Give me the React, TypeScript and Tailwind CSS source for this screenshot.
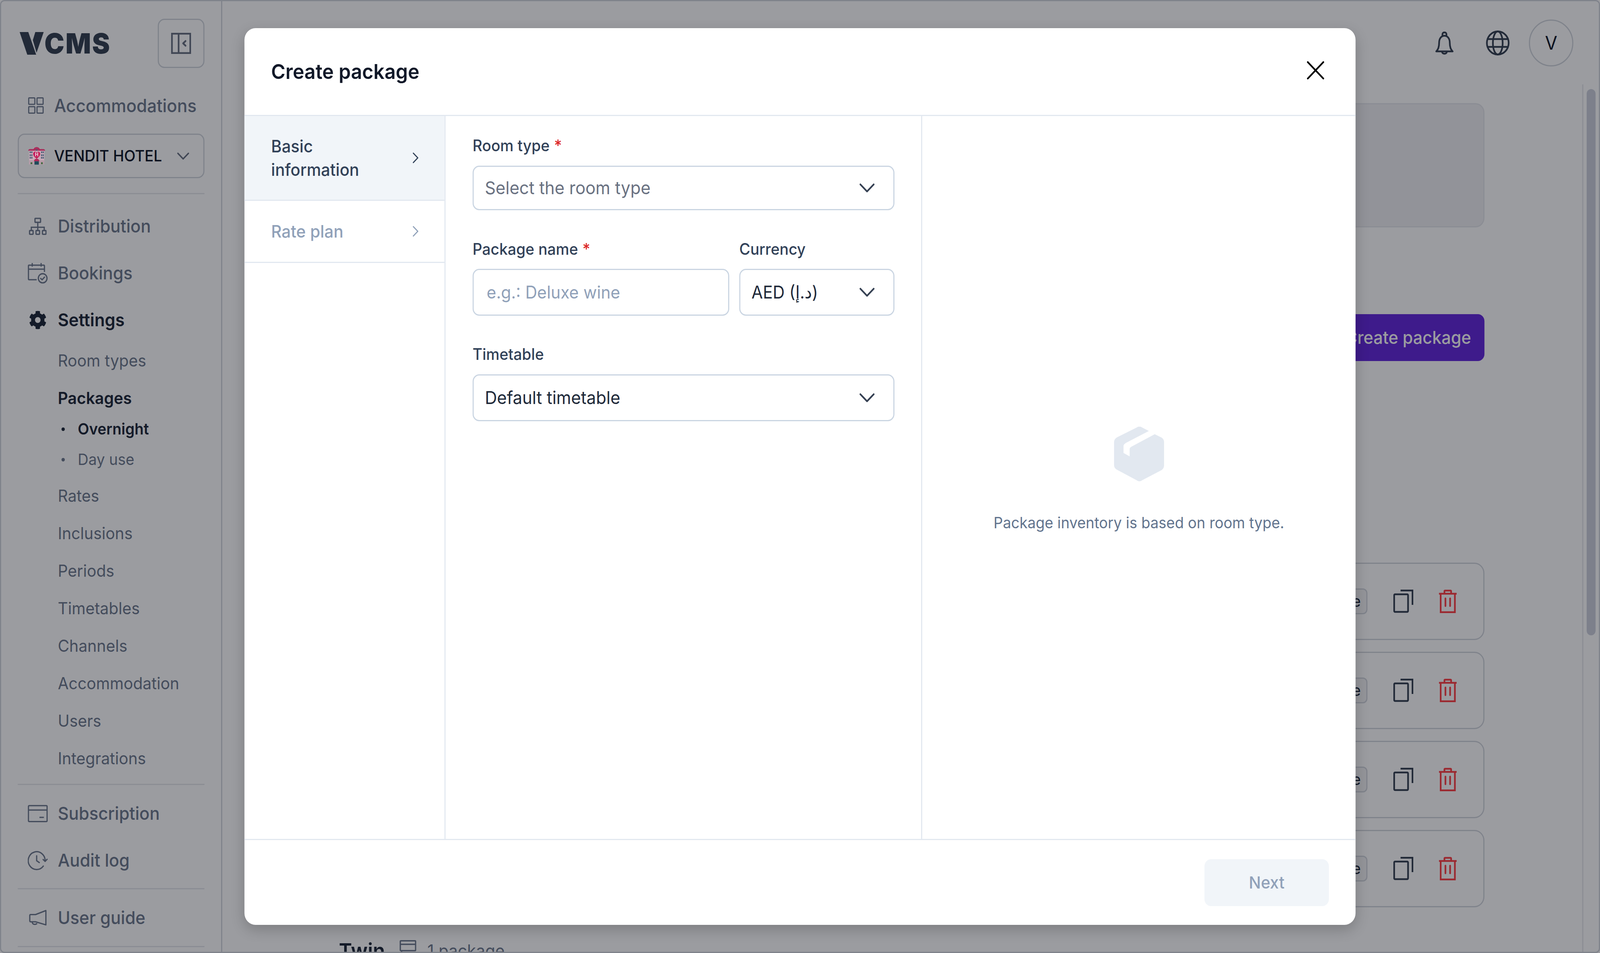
import { ChevronDown, ChevronRight, X } from "lucide-react";
import { FaCog } from "react-icons/fa";

const CollapseIcon = () => (
  <svg viewBox="0 0 18 18" className="h-[54px] w-[54px]" fill="none" stroke="currentColor" strokeWidth="1.5">
    <rect x="0.75" y="0.75" width="16.5" height="16.5" />
    <path d="M6.75 1v16" />
    <path d="M13 7l-2.2 2 2.2 2" strokeLinecap="round" strokeLinejoin="round" />
  </svg>
);

const GridIcon = () => (
  <svg viewBox="0 0 14 14" className="h-[42px] w-[42px]" fill="none" stroke="currentColor" strokeWidth="1">
    <rect x="0.5" y="0.5" width="5.5" height="5.5" rx="0.5" />
    <rect x="8" y="0.5" width="5.5" height="5.5" rx="0.5" />
    <rect x="0.5" y="8" width="5.5" height="5.5" rx="0.5" />
    <rect x="8" y="8" width="5.5" height="5.5" rx="0.5" />
  </svg>
);

// the love hotel emoji, sits above the backdrop like in the app
const HotelIcon = () => (
  <svg viewBox="0 0 140 140" className="relative z-10 h-[46px] w-[46px]">
    <rect x="8" y="24" width="124" height="112" fill="#c9aab8" />
    <rect x="42" y="8" width="56" height="30" fill="#c9aab8" />
    <path d="M0 30c2-9 8-13 14-13h28c6-9 16-16 28-16s22 7 28 16h28c6 0 12 4 14 13z" fill="#a8305c" />
    <rect x="64" y="18" width="12" height="12" rx="4" fill="#46607a" />
    {[13, 26, 106, 119].map((x) =>
      [35, 58, 78].map((y) => <rect key={`${x}-${y}`} x={x} y={y} width="9" height="13" fill="#3f5a74" />),
    )}
    <path d="M70 92C50 78 41 66 41 54c0-18 21-23 29-9 8-14 29-9 29 9 0 12-9 24-29 38z" fill="#c41e5a" />
    <text x="70" y="72" textAnchor="middle" fontSize="38" fontWeight="700" fill="#eadbe0">H</text>
    <rect x="8" y="104" width="124" height="32" fill="#b49ba6" />
    <path d="M48 112c0-12 10-20 22-20s22 8 22 20z" fill="#b02858" />
    <rect x="52" y="112" width="36" height="26" fill="#1f4a5a" />
    <rect x="20" y="120" width="14" height="14" fill="#3d6a3d" />
    <rect x="106" y="120" width="14" height="14" fill="#3d6a3d" />
  </svg>
);

const SitemapIcon = () => (
  <svg viewBox="0 0 16 15" className="h-[45px] w-12" fill="none" stroke="currentColor" strokeWidth="1.1">
    <rect x="5.5" y="0.6" width="5" height="3.4" rx="0.4" />
    <rect x="0.6" y="11" width="3.2" height="3.2" rx="0.5" />
    <rect x="6.4" y="11" width="3.2" height="3.2" rx="0.5" />
    <rect x="12.2" y="11" width="3.2" height="3.2" rx="0.5" />
    <path d="M8 4v7M2.2 11V8.2h11.6V11" />
  </svg>
);

const CalendarCheckIcon = () => (
  <svg viewBox="0 0 18 18" className="h-[54px] w-[54px]" fill="none" stroke="currentColor" strokeWidth="1.1">
    <path d="M8 14.6H1.2a.6.6 0 0 1-.6-.6V2.8a.6.6 0 0 1 .6-.6h13.2a.6.6 0 0 1 .6.6V8" />
    <path d="M.6 5.6H15M4 .4v3M12 .4v3" />
    <circle cx="13.4" cy="13.4" r="3.9" />
    <path d="M11.6 13.5l1.3 1.2 2.2-2.3" strokeLinecap="round" strokeLinejoin="round" />
  </svg>
);

const CardIcon = () => (
  <svg viewBox="0 0 18 15" className="h-[45px] w-[54px]" fill="none" stroke="currentColor" strokeWidth="1.1">
    <rect x="0.6" y="0.6" width="16.8" height="13.6" rx="0.8" />
    <path d="M.6 4.4h16.8M10.5 10.6h4" />
  </svg>
);

const ClockIcon = () => (
  <svg viewBox="0 0 18 17" className="h-[51px] w-[54px]" fill="none" stroke="currentColor" strokeWidth="1.1" strokeLinecap="round">
    <path d="M15.6 8.600A7.600 7.600 0 1 0 14 13.200" />
    <path d="M8 4.400v4.200l2.400 1.600" />
    <path d="M13.800 7.600l1.800 1.600 1.800-1.800" strokeLinejoin="round" />
  </svg>
);

const MegaphoneIcon = () => (
  <svg viewBox="0 0 16 14" className="h-[42px] w-12" fill="none" stroke="currentColor" strokeWidth="1.1" strokeLinejoin="round">
    <path d="M15.300.8v12.200L6 10.400H1.600a.8.8 0 0 1-.8-.8V5a.8.8 0 0 1 .8-.8H6z" />
    <path d="M3 10.400c0 2.200 2.600 2.800 4.400 1.400" />
  </svg>
);

const BellIcon = () => (
  <svg viewBox="0 0 24 24" className="h-[72px] w-[72px]" fill="none" stroke="currentColor" strokeWidth="1.5" strokeLinecap="round" strokeLinejoin="round">
    <path d="M10.200 5.600V4.400c0-1.900 3.600-1.900 3.600 0v1.200" />
    <path d="M4.600 19.200c1.800-1.600 2.600-3.600 2.600-7.400 0-3.600 2-6 4.800-6s4.800 2.400 4.800 6c0 3.800.8 5.800 2.600 7.400z" />
    <path d="M9.800 19.400c.3 2.300 4.100 2.300 4.400 0" />
  </svg>
);

const GlobeIcon = () => (
  <svg viewBox="0 0 24 24" className="h-[72px] w-[72px]" fill="none" stroke="currentColor" strokeWidth="1.5">
    <circle cx="12" cy="12" r="9.800" />
    <ellipse cx="12" cy="12" rx="4.400" ry="9.800" />
    <path d="M2.800 8.700h18.400M2.800 15.300h18.400" />
  </svg>
);

const CopyIcon = () => (
  <svg viewBox="0 0 18 20" className="h-[60px] w-[54px]" fill="none" stroke="currentColor" strokeWidth="1.5">
    <rect x="0.75" y="4" width="12.5" height="15" rx="0.8" />
    <path d="M6.500.75h10.750V13" />
  </svg>
);

const TrashIcon = () => (
  <svg viewBox="0 0 16 20" className="h-[60px] w-12" fill="none" stroke="currentColor" strokeWidth="1.5">
    <path d="M0 3.500h16M1.600 3.500v15.750h12.800V3.500" />
    <path d="M5 3.500V1.400a.6.6 0 0 1 .6-.6h4.800a.6.6 0 0 1 .6.6v2.100" />
    <path d="M5.900 7.500v6.500M10.100 7.500v6.500" strokeLinecap="round" />
  </svg>
);

const BedIcon = () => (
  <svg viewBox="0 0 15 18" className="h-[54px] w-[45px]" fill="none" stroke="currentColor" strokeWidth="1.2">
    <rect x="0.6" y="0.6" width="13.8" height="8.4" rx="0.6" />
    <path d="M.6 3.600h13.800M1.800 9v8M14 12H7v5" />
  </svg>
);

// box with the strap cut out, empty state of the side panel
const PackageIcon = () => (
  <svg viewBox="0 0 45 47" className="h-[141px] w-[135px] text-slate-200" fill="currentColor">
    <path d="M20.600.6c1.200-1 3.200-1 4.400 0l6.300 3.100-20.300 10c-1.700 1-2.500 1.800-2.500 3v5.700l5.500 2.900v-5.900c0-1.200.8-2 2.400-2.700L36.600 6.400l6.400 3c1.400 1 2 2.200 2 3.900v19.500c0 1.800-.6 3.100-2 4.100L25 45.800c-1.200 1-3.200 1-4.400 0L3 36.900c-2-1-3-2.300-3-4.100V13.300c0-1.900 1-3.400 3-4.400z" />
  </svg>
);

const subItems = ["Rates", "Inclusions", "Periods", "Timetables", "Channels", "Accommodation", "Users", "Integrations"];

const NavRow = ({ icon, label, active }: { icon: React.ReactNode; label: string; active?: boolean }) => (
  <div className={`flex h-[120px] items-center ${active ? "font-semibold text-gray-800" : "font-medium text-[#6e7a8e]"}`}>
    <div className="ml-[27px] flex w-[54px] shrink-0 items-center justify-center text-[#6e7a8e]">{icon}</div>
    <span className="ml-[27px] text-[45.5px]">{label}</span>
  </div>
);

const Sidebar = () => (
  <aside className="flex w-[597px] shrink-0 flex-col border-r-[3px] border-gray-300 px-[45px]">
    <div className="mt-[45px] flex h-[126px] shrink-0 items-center justify-between">
      <div className="flex items-center gap-[2px] pl-[5px] text-gray-700">
        <svg viewBox="0 0 195 174" className="h-[58px] w-[65px]" fill="currentColor">
          <path d="M0 0h70l64 174H62z" />
          <path d="M127 0h68l-58 159-30-97z" />
        </svg>
        <span className="text-[72px] leading-none font-black tracking-[3px]">CMS</span>
      </div>
      <button className="flex h-[126px] w-[126px] items-center justify-center rounded-[18px] border-[3px] border-gray-300 text-gray-500">
        <CollapseIcon />
      </button>
    </div>

    <div className="mt-[48px] flex h-[96px] items-center pl-[28px] font-medium text-[#6e7a8e]">
      <span className="w-[70px]"><GridIcon /></span>
      <span className="text-[46px]">Accommodations</span>
    </div>

    <div className="mt-[24px] flex h-[114px] items-center rounded-[18px] border-[3px] border-gray-300 pr-[26px] pl-[25px]">
      <span className="w-[70px] shrink-0"><HotelIcon /></span>
      <span className="flex-1 text-[40px] font-medium text-gray-900">VENDIT HOTEL</span>
      <ChevronDown className="h-[57px] w-[57px] text-gray-500" strokeWidth={1.5} />
    </div>

    <div className="mt-[38px] border-t-[3px] border-gray-200" />

    <div className="mt-[22px]">
      <NavRow icon={<SitemapIcon />} label="Distribution" />
      <NavRow icon={<CalendarCheckIcon />} label="Bookings" />
      <NavRow icon={<FaCog className="h-12 w-12 text-gray-800" />} label="Settings" active />
    </div>

    <div className="pl-[108px] text-[42.5px] text-[#6e7a8e]">
      <div className="-mt-[4px] flex h-[96px] items-center">Room types</div>
      <div className="flex h-[96px] items-center font-semibold text-gray-800">Packages</div>
      <div className="-mt-[8px] flex h-[78px] items-center text-[40px] font-semibold text-gray-800">
        <span className="mr-[35px] ml-[10px] h-[9px] w-[9px] rounded-full bg-gray-800" />
        Overnight
      </div>
      <div className="flex h-[78px] items-center text-[40px]">
        <span className="mr-[35px] ml-[10px] h-[9px] w-[9px] rounded-full bg-[#6e7a8e]" />
        Day use
      </div>
      <div className="mt-[6px]">
        {subItems.map((s) => (
          <div key={s} className="flex h-[96px] items-center">{s}</div>
        ))}
      </div>
    </div>

    <div className="mt-[17px] border-t-[3px] border-gray-200" />
    <div className="mt-[13px]">
      <NavRow icon={<CardIcon />} label="Subscription" />
      <NavRow icon={<ClockIcon />} label="Audit log" />
    </div>
    <div className="mt-[11px] border-t-[3px] border-gray-200" />
    <div className="mt-[13px]">
      <NavRow icon={<MegaphoneIcon />} label="User guide" />
    </div>
    <div className="mt-[12px] border-t-[3px] border-gray-200" />
  </aside>
);

const PackageRow = () => (
  <div className="flex h-[198px] items-center justify-end rounded-[27px] border-[3px] border-gray-300 pr-[72px]">
    <span className="flex h-[66px] items-center rounded-[12px] border-[3px] border-gray-300 bg-gray-100 px-[15px] text-[40px] text-gray-800">Active</span>
    <span className="ml-[70px] text-gray-700"><CopyIcon /></span>
    <span className="ml-[69px] text-[#ff4045]"><TrashIcon /></span>
  </div>
);

const Page = () => (
  <main className="flex min-w-0 flex-1 flex-col">
    <header className="flex h-[213px] shrink-0 items-center justify-end pr-[69px] text-gray-700">
      <span className="mr-[72px]"><BellIcon /></span>
      <span className="mr-[48px]"><GlobeIcon /></span>
      <div className="flex h-[120px] w-[120px] items-center justify-center rounded-full border-[3px] border-gray-300 text-[48px] text-gray-900">V</div>
    </header>
    <div className="flex min-h-0 flex-1">
      <div className="min-w-0 flex-1 pt-[48px] pr-[264px] pl-[240px]">
        <div className="h-[318px] rounded-[24px] border-[3px] border-gray-200 bg-[#f0f1f3]" />
        <div className="mt-[222px] flex justify-end">
          <button className="flex h-[120px] items-center rounded-[18px] bg-[#6429dc] px-[36px] text-[45px] font-medium text-white">Create package</button>
        </div>
        <div className="mt-[516px] flex flex-col gap-[30px]">
          <PackageRow />
          <PackageRow />
          <PackageRow />
          <PackageRow />
        </div>
        <div className="mt-[69px] flex h-[84px] items-center pl-[75px]">
          <span className="text-[54px] font-semibold text-gray-800">Twin</span>
          <span className="mr-[30px] ml-[39px] text-[#6e7a8e]"><BedIcon /></span>
          <span className="text-[44px] text-[#6e7a8e]">1 package</span>
        </div>
      </div>
      <div className="w-[45px] shrink-0 border-l-[3px] border-gray-200 pt-[12px] pl-[9px]">
        <div className="h-[1398px] w-6 rounded-full bg-[#cdd1dd]" />
      </div>
    </div>
  </main>
);

const Label = ({ text, required }: { text: string; required?: boolean }) => (
  <div className="text-[40.5px] leading-[60px] font-medium text-slate-700">
    {text}
    {required && <span className="ml-[12px] text-[#dc2626]">*</span>}
  </div>
);

const Select = ({ value, placeholder, textSize, className }: { value: string; placeholder?: boolean; textSize: string; className: string }) => (
  <div className={`flex items-center justify-between rounded-[18px] border-[3px] border-slate-300 pr-[35px] pl-[30px] ${className}`}>
    <span className={`${textSize} ${placeholder ? "text-gray-500" : "text-gray-800"}`}>{value}</span>
    <ChevronDown className="h-[72px] w-[72px] text-gray-700" strokeWidth={1.5} />
  </div>
);

const CreatePackageModal = () => (
  <div className="flex h-[2295px] w-[3000px] flex-col rounded-[30px] bg-white shadow-[0_12px_36px_rgba(0,0,0,0.2)]">
    <div className="flex h-[225px] shrink-0 items-center justify-between border-b-[3px] border-slate-200 pr-[66px] pl-[72px]">
      <h2 className="text-[52.5px] font-semibold text-gray-900">Create package</h2>
      <X className="h-[84px] w-[84px] -translate-y-[3px] text-black" strokeWidth={1.3} />
    </div>

    <div className="flex min-h-0 flex-1 border-b-[3px] border-slate-200">
      <nav className="w-[543px] shrink-0 border-r-[3px] border-slate-200">
        <div className="flex h-[217px] items-center justify-between border-b-[3px] border-slate-200 bg-slate-100 pr-[54px] pl-[72px] text-[43.5px] leading-[60px] font-medium text-slate-700">
          <span>Basic<br />information</span>
          <ChevronRight className="h-12 w-12" strokeWidth={1.5} />
        </div>
        <div className="flex h-[159px] items-center justify-between border-b-[3px] border-slate-200 pr-[54px] pl-[72px] text-[44px] font-medium text-slate-400">
          <span>Rate plan</span>
          <ChevronRight className="h-12 w-12" strokeWidth={1.5} />
        </div>
      </nav>

      <div className="w-[1287px] shrink-0 border-r-[3px] border-slate-200 pt-[46px] pr-[72px] pl-[73px]">
        <Label text="Room type" required />
        <Select value="Select the room type" placeholder textSize="text-[45.5px]" className="mt-[21px] h-[114px]" />
        <div className="mt-[70px] flex gap-[27px]">
          <div className="w-[693px]">
            <Label text="Package name" required />
            <input
              placeholder="e.g.: Deluxe wine"
              className="mt-[20px] h-[120px] w-full rounded-[18px] border-[3px] border-slate-300 px-[35px] text-[44.5px] placeholder:text-slate-400"
            />
          </div>
          <div className="min-w-0 flex-1">
            <Label text="Currency" />
            <Select value="AED (د.إ)" textSize="text-[44.5px]" className="mt-[20px] h-[120px]" />
          </div>
        </div>
        <div className="mt-[69px]">
          <Label text="Timetable" />
          <Select value="Default timetable" textSize="text-[45.5px]" className="mt-[21px] h-[120px]" />
        </div>
      </div>

      <div className="flex min-w-0 flex-1 flex-col items-center pt-[795px]">
        <PackageIcon />
        <p className="mt-[75px] text-[39.5px] leading-[60px] text-slate-500">Package inventory is based on room type.</p>
      </div>
    </div>

    <div className="flex h-[217px] shrink-0 items-center justify-end pr-[72px]">
      <button className="flex h-[120px] w-[336px] items-center justify-center rounded-[18px] bg-slate-100 text-[43px] font-medium text-slate-400">Next</button>
    </div>
  </div>
);

export default function App() {
  // design is 4320 wide, but the window measured 4096 here: squeeze x so the right edge stays on screen
  const fitX = Math.min(1, window.innerWidth / 4320);

  return (
    <div className="h-screen w-screen overflow-hidden">
      <div
        className="relative h-[2439px] w-[4320px] origin-top-left overflow-hidden bg-white font-['Inter','DejaVu_Sans',sans-serif]"
        style={{ transform: `scaleX(${fitX})` }}
      >
        <div className="flex h-full overflow-hidden rounded-[12px] border-[3px] border-gray-300">
          <Sidebar />
          <Page />
        </div>
        <div className="absolute inset-0 flex items-center justify-center bg-[#050812]/40">
          <CreatePackageModal />
        </div>
      </div>
    </div>
  );
}
